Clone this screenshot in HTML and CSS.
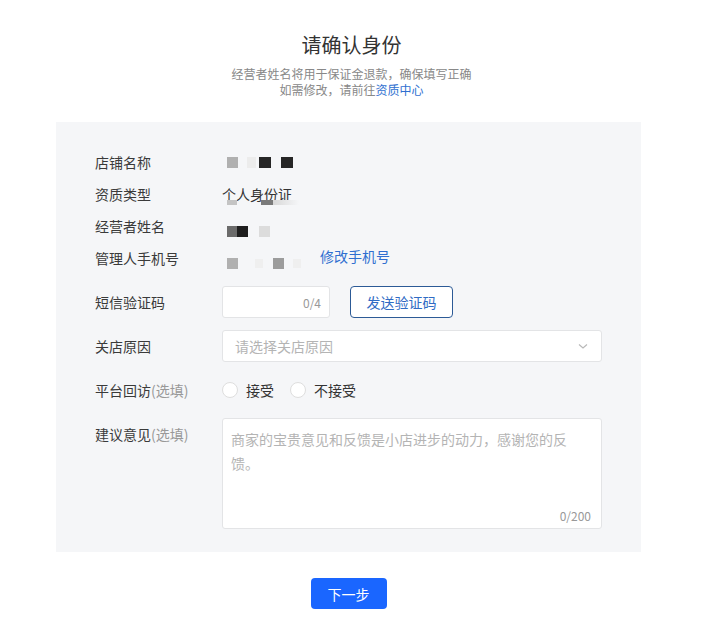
FILE: index.html
```html
<!DOCTYPE html>
<html lang="zh">
<head>
<meta charset="utf-8">
<link rel="stylesheet" href="styles.css">
</head>
<body>
<div class="page">
  <div class="header">
    <h1 class="title">请确认身份</h1>
    <p class="sub">经营者姓名将用于保证金退款，确保填写正确</p>
    <p class="sub">如需修改，请前往<a class="link">资质中心</a></p>
  </div>
  <div class="panel">
    <div class="row info">
      <div class="label">店铺名称</div>
      <div class="value">
        <span class="blk b-mid"></span><span class="blk b-faint sp8"></span><span class="blk b-dark"></span><span class="blk b-dark sp10"></span>
      </div>
    </div>
    <div class="row info">
      <div class="label">资质类型</div>
      <div class="value stack">
        <span class="txt">个人身份证</span>
        <span class="under"><span class="strip s-light"></span><span class="strip s-mid"></span><span class="strip s-fade"></span></span>
      </div>
    </div>
    <div class="row info">
      <div class="label">经营者姓名</div>
      <div class="value low">
        <span class="blk b-grey"></span><span class="blk b-black"></span><span class="blk b-faint2 sp11"></span>
      </div>
    </div>
    <div class="row info">
      <div class="label">管理人手机号</div>
      <div class="value low2">
        <span class="blk b-mid"></span><span class="blk b-ghost sp15"></span><span class="blk b-mid2"></span><span class="blk b-ghost sp9"></span>
        <a class="link edit">修改手机号</a>
      </div>
    </div>
    <div class="row field">
      <div class="label">短信验证码</div>
      <div class="value">
        <div class="input code"><span class="count">0/4</span></div>
        <button class="ghost-btn">发送验证码</button>
      </div>
    </div>
    <div class="row field">
      <div class="label">关店原因</div>
      <div class="value">
        <div class="input select">
          <span class="ph">请选择关店原因</span>
          <svg class="chev" width="12" height="12" viewBox="0 0 12 12"><path d="M2 4.5 L6 8 L10 4.5" fill="none" stroke="#b8b8b8" stroke-width="1.1"/></svg>
        </div>
      </div>
    </div>
    <div class="row field">
      <div class="label">平台回访<span class="opt">(选填)</span></div>
      <div class="value">
        <label class="radio"><span class="circle"></span>接受</label>
        <label class="radio"><span class="circle"></span>不接受</label>
      </div>
    </div>
    <div class="row area-row">
      <div class="label">建议意见<span class="opt">(选填)</span></div>
      <div class="value">
        <div class="textarea">
          <span class="ph">商家的宝贵意见和反馈是小店进步的动力，感谢您的反馈。</span>
          <span class="count big">0/200</span>
        </div>
      </div>
    </div>
  </div>
  <div class="footer">
    <button class="primary">下一步</button>
  </div>
</div>
</body>
</html>
```
FILE: styles.css
```css
* { box-sizing: border-box; }
body {
  margin: 0;
  background: #fff;
  font-family: "Noto Sans CJK SC", "Noto Sans", sans-serif;
  color: #333;
}
.page {
  width: 703px;
  padding-top: 30px;
}
.header { text-align: center; }
.title {
  margin: 0 0 6px;
  font-size: 20px;
  font-weight: 400;
  line-height: 30px;
  color: #333;
}
.sub {
  margin: 0;
  font-size: 12px;
  line-height: 16px;
  color: #888;
}
.link { color: #2f6fd0; text-decoration: none; }
.panel {
  margin: 24px 0 0 56px;
  width: 585px;
  height: 430px;
  background: #f5f6f8;
  padding: 24px 39px 0 39px;
  display: flex;
  flex-direction: column;
}
.row { display: flex; align-items: center; }
.row.info { height: 32px; }
.row.field { height: 32px; margin-top: 12px; }
.row.area-row { align-items: flex-start; margin-top: 12px; }
.label {
  width: 127px;
  flex: none;
  font-size: 14px;
  line-height: 32px;
  color: #3a3a3a;
}
.opt { color: #999; }
.value {
  flex: 1;
  display: flex;
  align-items: center;
  font-size: 14px;
}
.blk { display: inline-block; width: 11px; height: 11px; margin-left: 0; }
.value > .blk:first-child { margin-left: 5px; }
.b-mid { background: #b0b0b0; margin-right: 9px; }
.b-faint { background: #ececec; width: 9px; }
.sp8 { margin-right: 3px; }
.b-dark { background: #262626; width: 12px; }
.sp10 { margin-left: 10px; }
.low { padding-top: 11px; }
.low2 { padding-top: 10px; }
.b-grey { background: #6b6b6b; width: 10px; }
.b-black { background: #1e1e1e; width: 11px; }
.b-faint2 { background: #dcdcdc; width: 11px; }
.sp11 { margin-left: 11px; }
.b-ghost { background: #efefef; width: 8px; height: 9px; }
.sp15 { margin-left: 8px; margin-right: 10px; }
.b-mid2 { background: #9c9c9c; width: 11px; }
.sp9 { margin-left: 9px; }
.edit { margin-left: 19px; margin-top: -14px; font-size: 14px; }
.stack { flex-direction: column; align-items: flex-start; position: relative; }
.txt { line-height: 20px; color: #333; }
.under { display: flex; margin-top: -4px; }
.strip { display: inline-block; height: 5px; }
.s-light { background: #c4c4c4; width: 10px; margin-left: 5px; }
.s-mid { background: #7a7a7a; width: 12px; margin-left: 24px; }
.s-fade { background: linear-gradient(90deg, #d8d8d8, #f5f6f8); width: 26px; }
.input {
  height: 32px;
  background: #fff;
  border: 1px solid #e3e4e6;
  border-radius: 3px;
  display: flex;
  align-items: center;
}
.code { width: 108px; justify-content: flex-end; padding-right: 8px; }
.count { font-size: 12px; color: #999; }
.ghost-btn {
  margin-left: 20px;
  width: 103px;
  height: 32px;
  border: 1px solid #2c5a96;
  border-radius: 4px;
  background: #fff;
  color: #2f6bc4;
  font-family: inherit;
  font-size: 14px;
  padding: 0;
}
.select { width: 380px; padding: 0 12px; justify-content: space-between; }
.ph { color: #b4b4b4; font-size: 14px; }
.chev { margin-right: 0; }
.radio {
  display: flex;
  align-items: center;
  font-size: 14px;
  color: #333;
  margin-right: 16px;
}
.radio .circle {
  width: 16px;
  height: 16px;
  border-radius: 50%;
  border: 1px solid #dedede;
  background: #fff;
  margin-right: 8px;
}
.textarea {
  width: 380px;
  height: 111px;
  background: #fff;
  border: 1px solid #e3e4e6;
  border-radius: 3px;
  padding: 8px 30px 0 8px;
  position: relative;
  line-height: 24px;
}
.count.big {
  position: absolute;
  right: 10px;
  bottom: 2px;
  line-height: 20px;
}
.footer { display: flex; justify-content: center; padding-top: 26px; padding-right: 6px; }
.primary {
  width: 76px;
  height: 31px;
  border: none;
  border-radius: 4px;
  background: #1a66ff;
  color: #fff;
  font-family: inherit;
  font-size: 14px;
  padding: 0;
}
```
